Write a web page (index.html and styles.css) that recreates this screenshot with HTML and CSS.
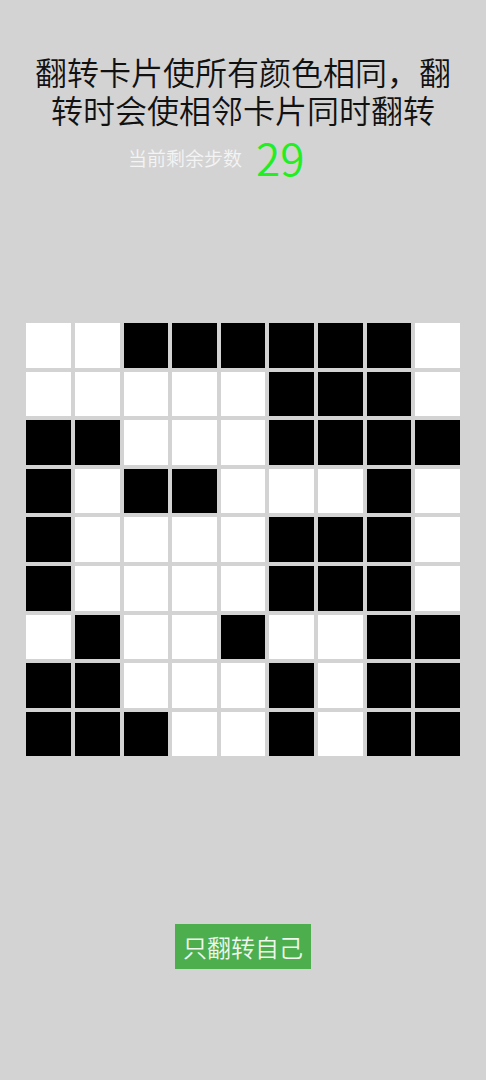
FILE: index.html
```html
<!DOCTYPE html>
<html lang="zh-CN">
<head>
<meta charset="utf-8">
<title>翻转卡片</title>
<link rel="stylesheet" href="styles.css">
</head>
<body>
<div class="page">
  <h1 class="title">翻转卡片使所有颜色相同，翻转时会使相邻卡片同时翻转</h1>
  <div class="counter">
    <span class="counter-label">当前剩余步数</span>
    <span class="counter-value">29</span>
  </div>
  <div class="board">
    <div class="cell w"></div><div class="cell w"></div><div class="cell b"></div><div class="cell b"></div><div class="cell b"></div><div class="cell b"></div><div class="cell b"></div><div class="cell b"></div><div class="cell w"></div>
    <div class="cell w"></div><div class="cell w"></div><div class="cell w"></div><div class="cell w"></div><div class="cell w"></div><div class="cell b"></div><div class="cell b"></div><div class="cell b"></div><div class="cell w"></div>
    <div class="cell b"></div><div class="cell b"></div><div class="cell w"></div><div class="cell w"></div><div class="cell w"></div><div class="cell b"></div><div class="cell b"></div><div class="cell b"></div><div class="cell b"></div>
    <div class="cell b"></div><div class="cell w"></div><div class="cell b"></div><div class="cell b"></div><div class="cell w"></div><div class="cell w"></div><div class="cell w"></div><div class="cell b"></div><div class="cell w"></div>
    <div class="cell b"></div><div class="cell w"></div><div class="cell w"></div><div class="cell w"></div><div class="cell w"></div><div class="cell b"></div><div class="cell b"></div><div class="cell b"></div><div class="cell w"></div>
    <div class="cell b"></div><div class="cell w"></div><div class="cell w"></div><div class="cell w"></div><div class="cell w"></div><div class="cell b"></div><div class="cell b"></div><div class="cell b"></div><div class="cell w"></div>
    <div class="cell w"></div><div class="cell b"></div><div class="cell w"></div><div class="cell w"></div><div class="cell b"></div><div class="cell w"></div><div class="cell w"></div><div class="cell b"></div><div class="cell b"></div>
    <div class="cell b"></div><div class="cell b"></div><div class="cell w"></div><div class="cell w"></div><div class="cell w"></div><div class="cell b"></div><div class="cell w"></div><div class="cell b"></div><div class="cell b"></div>
    <div class="cell b"></div><div class="cell b"></div><div class="cell b"></div><div class="cell w"></div><div class="cell w"></div><div class="cell b"></div><div class="cell w"></div><div class="cell b"></div><div class="cell b"></div>
  </div>
  <div class="actions">
    <button class="btn-self" type="button">只翻转自己</button>
  </div>
</div>
</body>
</html>
```

FILE: styles.css
```css
html, body {
  margin: 0;
  padding: 0;
  background: #d3d3d3;
  font-family: "Noto Sans CJK SC", "Noto Sans", sans-serif;
}

.page {
  width: 486px;
  min-height: 1080px;
}

.title {
  margin: 0;
  padding: 52px 20px 0;
  font-size: 32px;
  font-weight: 350;
  line-height: 38px;
  color: #111;
  text-align: center;
}

.counter {
  display: flex;
  justify-content: center;
  align-items: center;
  margin-top: 8px;
  height: 42px;
}

.counter-label {
  font-size: 19px;
  font-weight: 350;
  line-height: 1;
  color: #f4f4f4;
}

.counter-value {
  width: 102px;
  margin-left: 14px;
  font-size: 44px;
  font-weight: 350;
  line-height: 1;
  color: #22ee22;
}

.board {
  width: 90%;
  margin: 143px auto 0;
  display: grid;
  grid-template-columns: repeat(9, 1fr);
}

.cell {
  margin: 2px;
  aspect-ratio: 1 / 1;
}

.cell.w { background: #ffffff; }
.cell.b { background: #000000; }

.actions {
  display: flex;
  justify-content: center;
  margin-top: 166px;
}

.btn-self {
  border: none;
  margin: 0;
  padding: 0 8px;
  height: 45px;
  background: #4cae4c;
  color: #eef6ee;
  font-family: "Noto Sans CJK SC", "Noto Sans", sans-serif;
  font-size: 24px;
  font-weight: 350;
  line-height: 45px;
}
```
